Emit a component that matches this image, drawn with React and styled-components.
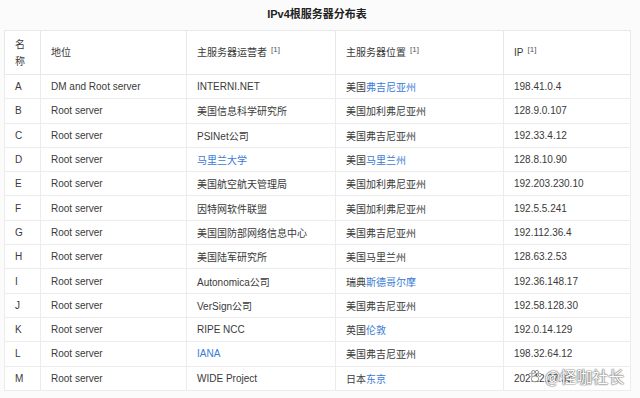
import React from 'react';
import styled, { createGlobalStyle } from 'styled-components';

const GlobalStyle = createGlobalStyle`
  html, body {
    margin: 0;
    padding: 0;
    background: #fbfbfb;
  }
  body {
    font-family: "Liberation Sans", Arial, "Noto Sans CJK SC", sans-serif;
    color: #333;
  }
`;

const Page = styled.div`
  position: relative;
  width: 640px;
  height: 398px;
  overflow: hidden;
  box-sizing: border-box;
  padding: 0 10px 0 4px;
`;

const Title = styled.div`
  height: 30px;
  line-height: 28px;
  text-align: center;
  font-size: 11px;
  font-weight: bold;
  color: #222;
`;

const Table = styled.table`
  width: 626px;
  border-collapse: collapse;
  table-layout: fixed;
  background: #fff;
  font-size: 10px;
  color: #3a3a3a;
`;

const Th = styled.th`
  height: 44px;
  padding: 0 10px;
  border: 1px solid #e8e8e8;
  text-align: left;
  font-weight: normal;
  line-height: 17px;
  width: ${p => p.w}px;
  box-sizing: border-box;
`;

const Td = styled.td`
  height: 23.3px;
  padding: 0 10px;
  border: 1px solid #ececec;
  white-space: nowrap;
`;

const Sup = styled.sup`
  font-size: 8px;
  color: #555;
  margin-left: 4px;
  vertical-align: 4px;
  line-height: 0;
`;

const Link = styled.span`
  color: #3a7bd5;
`;

const Watermark = styled.div`
  position: absolute;
  left: 527px;
  top: 364px;
  display: flex;
  align-items: center;
  gap: 2px;
  font-size: 16px;
  color: #fff;
  text-shadow: 0 0 1px #666, 0 0 1px #666, 0 0 2px #888;
  font-family: "Noto Sans CJK SC", sans-serif;
`;

const rows = [
  ['A', 'DM and Root server', 'INTERNI.NET', ['美国', '弗吉尼亚州'], '198.41.0.4'],
  ['B', 'Root server', '美国信息科学研究所', ['美国加利弗尼亚州'], '128.9.0.107'],
  ['C', 'Root server', 'PSINet公司', ['美国弗吉尼亚州'], '192.33.4.12'],
  ['D', 'Root server', { link: '马里兰大学' }, ['美国', '马里兰州'], '128.8.10.90'],
  ['E', 'Root server', '美国航空航天管理局', ['美国加利弗尼亚州'], '192.203.230.10'],
  ['F', 'Root server', '因特网软件联盟', ['美国加利弗尼亚州'], '192.5.5.241'],
  ['G', 'Root server', '美国国防部网络信息中心', ['美国弗吉尼亚州'], '192.112.36.4'],
  ['H', 'Root server', '美国陆军研究所', ['美国马里兰州'], '128.63.2.53'],
  ['I', 'Root server', 'Autonomica公司', ['瑞典', '斯德哥尔摩'], '192.36.148.17'],
  ['J', 'Root server', 'VerSign公司', ['美国弗吉尼亚州'], '192.58.128.30'],
  ['K', 'Root server', 'RIPE NCC', ['英国', '伦敦'], '192.0.14.129'],
  ['L', 'Root server', { link: 'IANA' }, ['美国弗吉尼亚州'], '198.32.64.12'],
  ['M', 'Root server', 'WIDE Project', ['日本', '东京'], '202.12.27.33'],
];

const Paw = () => (
  <svg width="16" height="16" viewBox="0 0 14 14">
    <g fill="#fff" stroke="#777" strokeWidth="0.7">
      <ellipse cx="7" cy="9.5" rx="3.2" ry="2.6" />
      <circle cx="3" cy="6" r="1.4" />
      <circle cx="5.5" cy="3.5" r="1.4" />
      <circle cx="8.7" cy="3.5" r="1.4" />
      <circle cx="11.2" cy="6" r="1.4" />
    </g>
  </svg>
);

const App = () => {
  return (
    <Page>
      <GlobalStyle />
      <Title>IPv4根服务器分布表</Title>
      <Table>
        <thead>
          <tr>
            <Th w={36}>名称</Th>
            <Th w={146}>地位</Th>
            <Th w={149}>主服务器运营者<Sup>[1]</Sup></Th>
            <Th w={168}>主服务器位置<Sup>[1]</Sup></Th>
            <Th w={127}>IP<Sup>[1]</Sup></Th>
          </tr>
        </thead>
        <tbody>
          {rows.map(r => (
            <tr key={r[0]}>
              <Td>{r[0]}</Td>
              <Td>{r[1]}</Td>
              <Td>{typeof r[2] === 'string' ? r[2] : <Link>{r[2].link}</Link>}</Td>
              <Td>
                {r[3][0]}
                {r[3][1] && <Link>{r[3][1]}</Link>}
              </Td>
              <Td>{r[4]}</Td>
            </tr>
          ))}
        </tbody>
      </Table>
      <Watermark>
        <Paw />
        <span>@怪咖社长</span>
      </Watermark>
    </Page>
  );
};

export default App;
